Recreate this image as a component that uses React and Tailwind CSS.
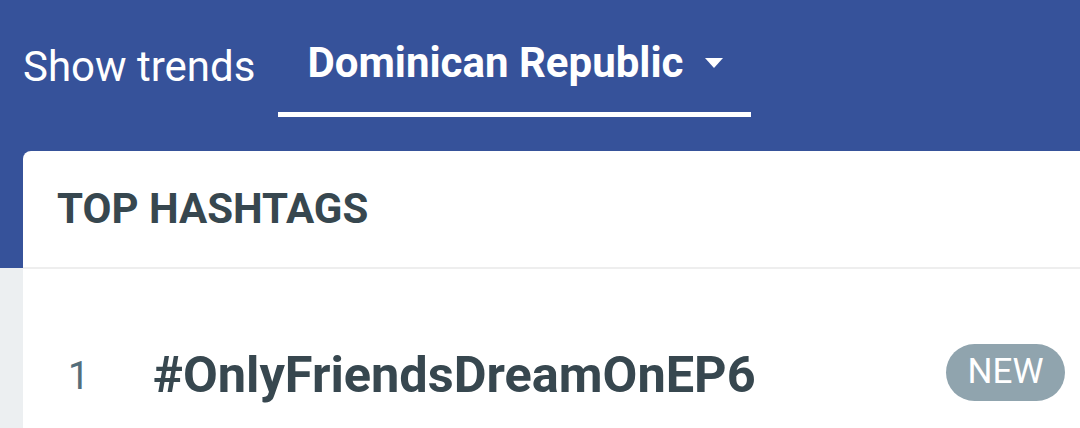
import React from 'react';

const font = { fontFamily: 'Roboto, "Liberation Sans", sans-serif' };

const trends = [{ rank: 1, tag: '#OnlyFriendsDreamOnEP6', isNew: true }];

const App = () => {
  return (
    <div className="relative w-[1080px] h-[428px] overflow-hidden bg-[#eceff1]" style={font}>
      {/* header band */}
      <div className="h-[268px] bg-[#36529a]">
        <div className="flex h-[117px] pl-[23px]">
          <span className="pt-[46px] text-[42px] leading-none text-white">Show trends</span>
          <div className="ml-[23px] flex items-start w-[473px] h-full border-b-[5px] border-white pl-[29px] pt-[42px]">
            <span className="text-[42px] leading-none font-bold text-white">Dominican Republic</span>
            <span className="ml-[22px] mt-[16px] w-0 h-0 border-l-[9px] border-r-[9px] border-t-[10px] border-l-transparent border-r-transparent border-t-white" />
          </div>
        </div>
      </div>

      {/* card */}
      <div className="absolute left-[23px] top-[151px] right-0 bottom-0 bg-white rounded-tl-[8px]">
        <div className="h-[118px] flex items-center pl-[34px] border-b-2 border-[#eeeeee]">
          <h2 className="text-[42px] font-bold text-[#37474f] leading-none">TOP HASHTAGS</h2>
        </div>
        {trends.map((t) => (
          <div key={t.rank} className="flex items-center h-[57px] mt-[75px] pl-[45px] pr-[15px]">
            <span className="w-[85px] text-[38px] text-[#546e7a] leading-none pt-[6px]">{t.rank}</span>
            <span className="flex-1 text-[50.5px] font-bold text-[#37474f] leading-none pt-[5px]">{t.tag}</span>
            {t.isNew && (
              <span className="w-[119px] h-[57px] rounded-full bg-[#90a4ae] text-white text-[35px] flex items-center justify-center">
                NEW
              </span>
            )}
          </div>
        ))}
      </div>
    </div>
  );
};

export default App;
